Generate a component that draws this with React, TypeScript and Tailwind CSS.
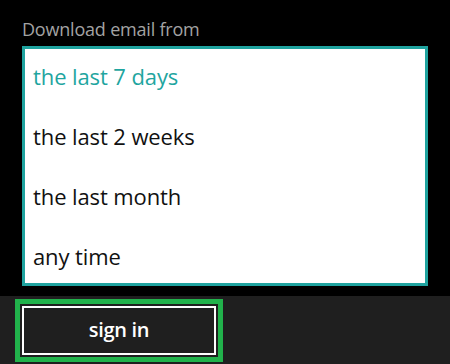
import React, { useState } from 'react';

const options = ['the last 7 days', 'the last 2 weeks', 'the last month', 'any time'];

export default function App() {
  const [selected, setSelected] = useState(0);

  return (
    <div
      className="w-[450px] h-[364px] bg-black flex flex-col overflow-hidden"
      style={{ fontFamily: '"Open Sans", "Noto Sans", sans-serif' }}
    >
      <div className="flex-1 px-[22px] pt-[17px]">
        <div className="text-[18px] leading-[24px] text-[#a3a3a3] tracking-[-0.2px]">Download email from</div>
        <div className="mt-[5px] w-[406px] h-[240px] bg-white border-[3px] border-[#1fa39f] flex flex-col overflow-hidden">
          {options.map((opt, i) => (
            <button
              key={opt}
              onClick={() => setSelected(i)}
              className={`h-[60px] shrink-0 px-[8px] pb-[6px] text-left text-[22px] tracking-[-0.1px] ${
                i === selected ? 'text-[#1fa59f]' : 'text-[#111111]'
              }`}
            >
              {opt}
            </button>
          ))}
        </div>
      </div>
      <div className="h-[68px] bg-[#1f1f1f] pl-[15px] pt-[3px]">
        <div className="w-[208px] h-[63px] border-[5px] border-[#21b24b] p-[2px]">
          <button className="w-full h-full border-[2px] border-white bg-[#1f1f1f] text-white text-[20px] font-semibold tracking-[-0.3px] leading-none pb-[2px]">
            sign in
          </button>
        </div>
      </div>
    </div>
  );
}
